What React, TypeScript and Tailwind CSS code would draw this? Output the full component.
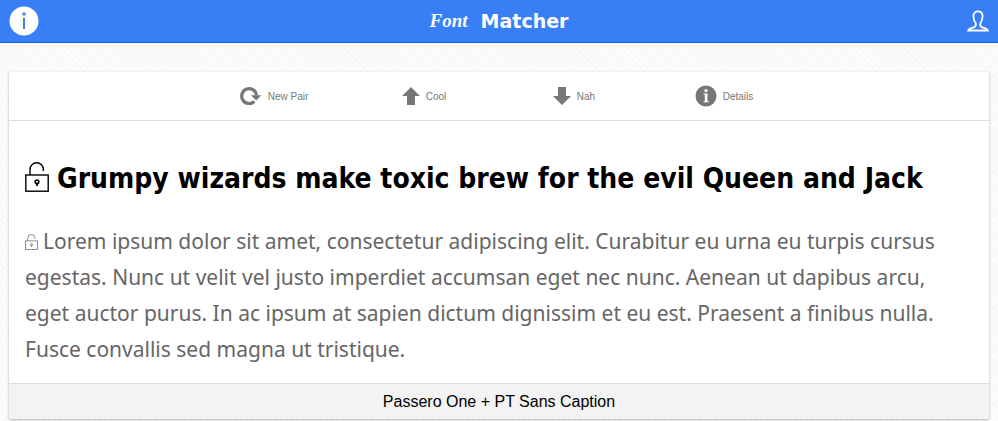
import React from "react";

function UnlockIcon({ className }: { className: string }) {
  return (
    <svg viewBox="0 0 24 30" className={className} fill="none" stroke="currentColor" strokeWidth="1.4" aria-hidden="true">
      <path d="M5 13V7.500a6.700 6.700 0 0 1 13.400 0V9" />
      <rect x="0.8" y="13" width="22.4" height="16.2" />
      <circle cx="12" cy="19.8" r="1.8" strokeWidth="1.6" />
      <path d="M12 21.5V24" strokeWidth="1.8" />
    </svg>
  );
}

function RefreshIcon() {
  return (
    <svg viewBox="0 0 22 20" className="h-5 w-[22px]" aria-hidden="true">
      <path d="M14.4 15.300A7.400 7.400 0 1 1 16.500 9.400" fill="none" stroke="currentColor" strokeWidth="3.2" />
      <path d="M10.800 9.200H21.400L16.200 14.400Z" fill="currentColor" />
    </svg>
  );
}

function ArrowUpIcon() {
  return (
    <svg viewBox="0 0 18 20" className="h-5 w-[18px]" fill="currentColor" aria-hidden="true">
      <path d="M9 1 18 10H13V19H5V10H0Z" />
    </svg>
  );
}

function ArrowDownIcon() {
  return (
    <svg viewBox="0 0 18 20" className="h-5 w-[18px]" fill="currentColor" aria-hidden="true">
      <path d="M9 19 18 10H13V1H5V10H0Z" />
    </svg>
  );
}

function DetailsIcon() {
  return (
    <svg viewBox="0 0 22 22" className="size-[22px]" aria-hidden="true">
      <circle cx="11" cy="11" r="10.5" fill="currentColor" />
      <circle cx="11" cy="5.6" r="1.7" fill="#fff" />
      <path d="M8.5 8.6h4v7.6h1.2v1H8.5v-1h1.3V9.6H8.5Z" fill="#fff" />
    </svg>
  );
}

function Action({ icon, label }: { icon: React.ReactNode; label: string }) {
  return (
    <button type="button" className="flex items-center justify-center gap-[6px] text-[10px] leading-4 text-[#777]">
      {icon}
      <span className="pt-[2px]">{label}</span>
    </button>
  );
}

export default function App() {
  return (
    <div className="min-h-screen bg-[#fafafa] bg-[repeating-linear-gradient(45deg,#fcfcfc_0px,#fcfcfc_2px,#f8f8f8_2px,#f8f8f8_4px)] font-['Liberation_Sans',Arial,sans-serif]">
      <header className="flex h-[43px] items-center justify-between border-b border-[#0c63ee] bg-[#387ef5] px-[9px] text-white">
        <button type="button" aria-label="About" className="w-[30px]">
          <svg viewBox="0 0 30 30" className="size-[30px]" aria-hidden="true">
            <circle cx="15" cy="15" r="14.5" fill="#fff" />
            <circle cx="15" cy="8" r="1.7" fill="#387ef5" />
            <path d="M14 12h2v11h-2Z" fill="#387ef5" />
          </svg>
        </button>
        <h1 className="flex items-center gap-[13px]">
          <span className="font-['Liberation_Serif',serif] text-[19px] font-bold italic">Font</span>
          <span className="font-['DejaVu_Sans',sans-serif] text-[19px] font-bold">Matcher</span>
        </h1>
        <button type="button" aria-label="Profile" className="flex w-[30px] justify-end">
          <svg viewBox="0 0 22 22" className="size-[22px]" fill="none" stroke="#fff" strokeWidth="1.8" aria-hidden="true">
            <path d="M8.800 13.500C7.200 11.500 6.400 9 6.400 6c0-3 1.900-4.700 4.600-4.700S15.600 3 15.600 6c0 3-.8 5.500-2.400 7.500-.3 2 .3 3.300 2 3.800 2.600.7 5 .9 5.600 3.200H1.200c.6-2.300 3-2.500 5.600-3.200 1.700-.5 2.300-1.800 2-3.800Z" />
          </svg>
        </button>
      </header>
      <main className="px-[9px] pt-[29px]">
        <article className="overflow-hidden rounded-[2px] bg-white shadow-[0_1px_3px_rgba(0,0,0,0.3)]">
          <nav className="grid h-[49px] grid-cols-[repeat(4,150px)] justify-center border-b border-[#ddd]">
            <Action icon={<RefreshIcon />} label="New Pair" />
            <Action icon={<ArrowUpIcon />} label="Cool" />
            <Action icon={<ArrowDownIcon />} label="Nah" />
            <Action icon={<DetailsIcon />} label="Details" />
          </nav>
          <div className="px-4 pt-[34px] pb-4">
            <h2 className="flex items-center gap-2 font-['DejaVu_Sans_Condensed','DejaVu_Sans',sans-serif] text-[28px] leading-10 font-bold text-black">
              <UnlockIcon className="h-[30px] w-6 shrink-0" />
              <span className="pt-1">Grumpy wizards make toxic brew for the evil Queen and Jack</span>
            </h2>
            <p className="mt-6 font-['Noto_Sans',sans-serif] text-[21px] leading-9 text-[#666]">
              <UnlockIcon className="mr-[5px] inline-block h-4 w-[13px] align-[-1px]" />
              Lorem ipsum dolor sit amet, consectetur adipiscing elit. Curabitur eu urna eu turpis cursus egestas. Nunc ut velit vel justo imperdiet accumsan eget nec nunc. Aenean ut dapibus arcu, eget auctor purus. In ac ipsum at sapien dictum dignissim et eu est. Praesent a finibus nulla. Fusce convallis sed magna ut tristique.
            </p>
          </div>
          <footer className="border-t border-[#ddd] bg-[#f3f3f3] text-center text-[16px] leading-[35px] text-black">
            Passero One + PT Sans Caption
          </footer>
        </article>
      </main>
    </div>
  );
}
